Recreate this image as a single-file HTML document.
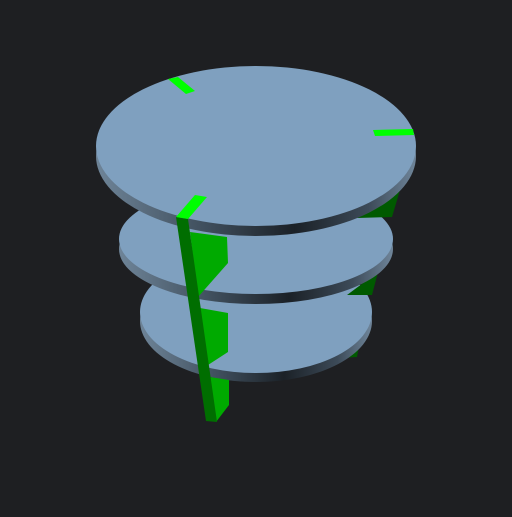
<!DOCTYPE html>
<html><head><style>html,body{margin:0;padding:0;background:#1e1f22;}</style></head>
<body>
<svg width="512" height="512" viewBox="0 0 512 512" xmlns="http://www.w3.org/2000/svg">
<defs>
<linearGradient id="s" x1="0" x2="1" y1="0" y2="0">
<stop offset="0" stop-color="#6e8498"/>
<stop offset="0.35" stop-color="#3e4d5b"/>
<stop offset="0.62" stop-color="#1b2127"/>
<stop offset="0.85" stop-color="#3c4a58"/>
<stop offset="1" stop-color="#6f859a"/>
</linearGradient>
</defs>
<rect width="512" height="512" fill="#1e1f22"/>
<!-- bottom disc -->
<polygon points="342,358 357,357 360,340" fill="#005a00"/>
<ellipse cx="256" cy="321" rx="116" ry="61" fill="url(#s)"/>
<ellipse cx="256" cy="312" rx="116" ry="61" fill="#7fa0bf"/>
<polygon points="210,377 229,380 229,405 216,422" fill="#00aa00"/>
<!-- middle disc -->
<polygon points="347,295 372,295 378,272" fill="#005a00"/>
<polygon points="200,308 228,313 228,352 208,365" fill="#00aa00"/>
<ellipse cx="256" cy="249" rx="137" ry="55" fill="url(#s)"/>
<ellipse cx="256" cy="239" rx="137" ry="55" fill="#7fa0bf"/>
<polygon points="190,232 227,237 228,263 198,297" fill="#00aa00"/>
<!-- top disc -->
<polygon points="357,218 392,217 400,190" fill="#005a00"/>
<ellipse cx="256" cy="156" rx="160" ry="80" fill="url(#s)"/>
<ellipse cx="256" cy="146" rx="160" ry="80" fill="#7fa0bf"/>
<polygon points="168,79 178,77 195,91 186,94" fill="#00ff00"/>
<polygon points="373,130 413,129 414,135 375,136" fill="#00ff00"/>
<!-- post -->
<polygon points="176,217 188,219 217,422 206,421" fill="#006e00"/>
<polygon points="176,217 195,195 207,197 188,219" fill="#00ff00"/>
</svg>
</body></html>
